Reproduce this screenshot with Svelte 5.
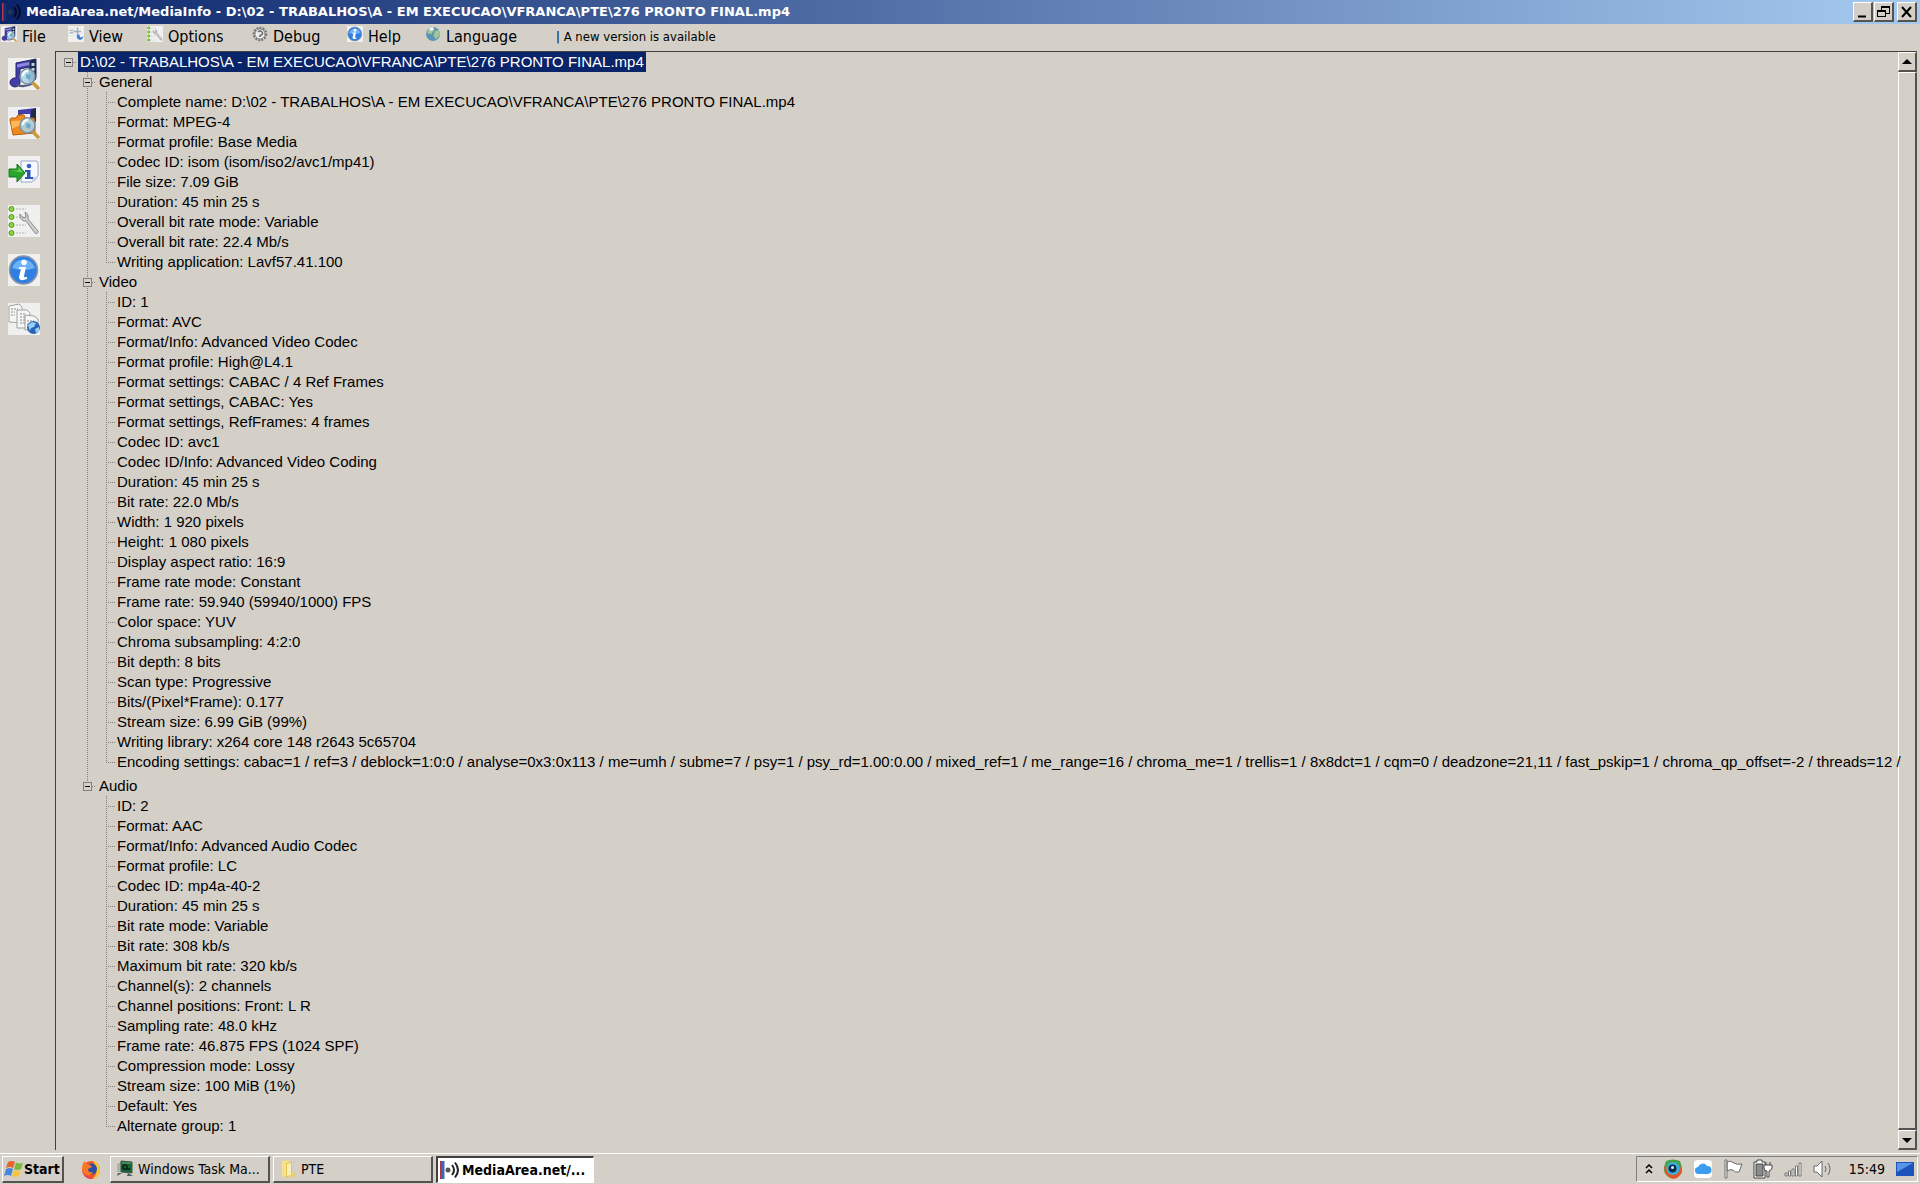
<script>
  const path = 'D:\\02 - TRABALHOS\\A - EM EXECUCAO\\VFRANCA\\PTE\\276 PRONTO FINAL.mp4';

  const menus = ['File', 'View', 'Options', 'Debug', 'Help', 'Language'];
  const menuIcons = ['media', 'sheet', 'options', 'debug', 'info', 'globe'];

  const tools = [
    { icon: 'media', label: 'Open file' },
    { icon: 'folder', label: 'Open folder' },
    { icon: 'export', label: 'Export' },
    { icon: 'options', label: 'Preferences' },
    { icon: 'info', label: 'About' },
    { icon: 'pages', label: 'View' }
  ];

  const sections = [
    {
      name: 'General',
      items: [
        'Complete name: ' + path,
        'Format: MPEG-4',
        'Format profile: Base Media',
        'Codec ID: isom (isom/iso2/avc1/mp41)',
        'File size: 7.09 GiB',
        'Duration: 45 min 25 s',
        'Overall bit rate mode: Variable',
        'Overall bit rate: 22.4 Mb/s',
        'Writing application: Lavf57.41.100'
      ]
    },
    {
      name: 'Video',
      items: [
        'ID: 1',
        'Format: AVC',
        'Format/Info: Advanced Video Codec',
        'Format profile: High@L4.1',
        'Format settings: CABAC / 4 Ref Frames',
        'Format settings, CABAC: Yes',
        'Format settings, RefFrames: 4 frames',
        'Codec ID: avc1',
        'Codec ID/Info: Advanced Video Coding',
        'Duration: 45 min 25 s',
        'Bit rate: 22.0 Mb/s',
        'Width: 1 920 pixels',
        'Height: 1 080 pixels',
        'Display aspect ratio: 16:9',
        'Frame rate mode: Constant',
        'Frame rate: 59.940 (59940/1000) FPS',
        'Color space: YUV',
        'Chroma subsampling: 4:2:0',
        'Bit depth: 8 bits',
        'Scan type: Progressive',
        'Bits/(Pixel*Frame): 0.177',
        'Stream size: 6.99 GiB (99%)',
        'Writing library: x264 core 148 r2643 5c65704',
        'Encoding settings: cabac=1 / ref=3 / deblock=1:0:0 / analyse=0x3:0x113 / me=umh / subme=7 / psy=1 / psy_rd=1.00:0.00 / mixed_ref=1 / me_range=16 / chroma_me=1 / trellis=1 / 8x8dct=1 / cqm=0 / deadzone=21,11 / fast_pskip=1 / chroma_qp_offset=-2 / threads=12 /'
      ]
    },
    {
      name: 'Audio',
      items: [
        'ID: 2',
        'Format: AAC',
        'Format/Info: Advanced Audio Codec',
        'Format profile: LC',
        'Codec ID: mp4a-40-2',
        'Duration: 45 min 25 s',
        'Bit rate mode: Variable',
        'Bit rate: 308 kb/s',
        'Maximum bit rate: 320 kb/s',
        'Channel(s): 2 channels',
        'Channel positions: Front: L R',
        'Sampling rate: 48.0 kHz',
        'Frame rate: 46.875 FPS (1024 SPF)',
        'Compression mode: Lossy',
        'Stream size: 100 MiB (1%)',
        'Default: Yes',
        'Alternate group: 1'
      ]
    }
  ];
</script>

{#snippet note()}
  <path d="M8 5 28 1v18.500a5 4 0 0 1-3 3.500l-4 1V9l-9 2v13a5 4.500 0 1 1-4-4Z" fill="#4240a8" stroke="#24246c" />
  <path d="M9 6.500 21 4v3L9 9.500Z" fill="#8c88e0" />
  <path d="m22 3 6-2v20l-6 3Z" fill="#1f2c48" />
  <path d="M23.500 5h3v3h-3zm0 5h3v3h-3z" fill="#b9d4e4" />
  <path d="M9 27q8 3 17-2" stroke="#555a80" stroke-width="2" fill="none" />
{/snippet}

{#snippet lens()}
  <path d="m24 24 6 6" stroke="#c89a3c" stroke-width="3.500" stroke-linecap="round" />
  <circle cx="19.500" cy="18.500" r="7.500" fill="#a9d3ea" fill-opacity=".85" stroke="#7d93a5" stroke-width="1.500" />
  <path d="M14.500 18q1-5 6-5.500" stroke="#fff" stroke-width="2" fill="none" />
  <path d="m18 16 5 1-1 5-4-2Z" fill="#6fa9c8" />
{/snippet}

{#snippet icon(name)}
  <svg class="art" viewBox="0 0 32 32" aria-hidden="true">
    <rect width="32" height="32" fill="#f0f0f0" />
    {#if name === 'media'}
      {@render note()}
      {@render lens()}
    {:else if name === 'folder'}
      <path d="M10 3 28 1v14H10Z" fill="#4240a8" />
      <path d="M14 7h8v8h-8z" fill="#f0f0f0" />
      <path d="m23 3 5-2v14h-5Z" fill="#1f2c48" />
      <path d="M2 13q0-2 2-2h4l2-3h6l1 3h9l1 3v12L5 28Z" fill="#ee8a1c" stroke="#b65e0c" />
      <path d="m3 14 23-1-1 7Q12 16 4 22Z" fill="#ffb757" />
      {@render lens()}
    {:else if name === 'export'}
      <path d="M13 5h15q2 0 2 2v13l-6 6H13Z" fill="#f7f9ff" stroke="#9ba6c4" />
      <path d="M30 20q-1 5-6 6 1-3 0-5 3 1 6-1Z" fill="#c5cde2" />
      <path d="M1 13h8V8l8 9-8 9v-5H1Z" fill="#28a428" stroke="#14761c" />
      <path d="M2.500 14.500h8v-3l4.500 5Z" fill="#6ed45c" />
      <circle cx="21" cy="10" r="2.300" fill="#3768c8" />
      <path d="M17 14h5.500v7H25v2h-8v-2h2v-5h-2Z" fill="#2d57b4" />
    {:else if name === 'options'}
      {#each [4, 12, 20, 28] as y}
        <circle cx="3.500" cy={y} r="2.500" fill="#8ed63c" stroke="#4f9a20" />
        <path d="M8 {y}h10" stroke="#b4b4b4" stroke-dasharray="2 1" />
      {/each}
      <path d="M12 9q-1 5 4 7l2 0 9 12q3 2 3-2L20 14q1-5-3-7l1 5-3 1Z" fill="#cfcfcf" stroke="#8c8c8c" />
    {:else if name === 'info'}
      <circle cx="15.500" cy="16" r="14" fill="#2f7fe0" stroke="#8894a8" stroke-width="1.500" />
      <path d="M4 14a12 12 0 0 1 23 0Q16 18 4 14Z" fill="#6db1f6" />
      <circle cx="16" cy="8.500" r="2.800" fill="#fff" />
      <path d="M11 13h7l-2 9q0 2 3 1v2q-8 3-8-2l2-8h-2Z" fill="#fff" />
    {:else if name === 'pages'}
      <g fill="#f6f6f6" stroke="#a0a0a0">
        <path d="M1 3 11 1l3 3v16L1 19Z" />
        <path d="m9 7 10 0 3 3v15H9Z" />
        <path d="m17 12 9 1 4 3v11H17Z" />
      </g>
      <path d="M3 6h7M3 9h4M3 12h4m6-2v12m3-12v12m3-1h7m-7-3h7" stroke="#888" stroke-dasharray="2 1" />
      <circle cx="25.500" cy="24.500" r="6.500" fill="#2864b4" />
      <path d="m20 22 4-3 4 1-2 4-3 1-1 3Zm7 4 4-2v4l-3 2Z" fill="#98d0f4" />
    {:else if name === 'sheet'}
      <path d="M1 5h10v14H1Z" fill="#fff" stroke="#d0d0d0" />
      <path d="M3 9h7M3 14h7M19 3v14M11 11h15" stroke="#a4aebb" stroke-width="3" />
      <path d="M18 17q-2 9 6 11 6-1 7-8l-4 3q-4 1-4-6Z" fill="#3f80cc" />
    {:else if name === 'debug'}
      <rect width="32" height="32" fill="#d4d0c8" />
      <circle cx="16" cy="16" r="12" fill="#e4e4e4" stroke="#777" stroke-width="5" stroke-dasharray="4 2" />
      <circle cx="16" cy="16" r="10" fill="#eee" stroke="#888" stroke-width="2" />
      <path d="M12 12q4-4 8 0t-4 7v3" stroke="#666" stroke-width="3" fill="none" />
    {:else if name === 'globe'}
      <rect width="32" height="32" fill="#d4d0c8" />
      <circle cx="16" cy="16" r="14" fill="#5d94b4" />
      <path d="m5 8 8-6 6 5-6 9-8-1Zm15 2 8-2 2 9-8 10-5-8Z" fill="#a3c795" />
      <path d="m8 4 8-2 2 5-7 3Z" fill="#eef5f6" />
    {/if}
  </svg>
{/snippet}

{#snippet waves(light)}
  <svg class="waves" viewBox="0 0 20 18" aria-hidden="true">
    <path d="M1 0v18" stroke="#b4344c" stroke-width="2" />
    <path d="M3 0v18" stroke={light ? '#3c68b4' : '#14306c'} stroke-width="3" />
    <circle cx="8" cy="9" r="2.500" fill={light ? '#555' : '#253452'} />
    <path d="M12 4q4 5 0 10M15 1.500q6 7.500 0 15" stroke={light ? '#222' : '#040a24'} stroke-width="2" fill="none" />
  </svg>
{/snippet}

<div class="window">
  <header class="title">
    {@render waves(false)}
    <h1>MediaArea.net/MediaInfo - {path}</h1>
    <div class="controls">
      <button class="raised" aria-label="Minimize">
        <svg viewBox="0 0 16 16"><path d="M3 12.500h8" stroke="#000" stroke-width="2" /></svg>
      </button>
      <button class="raised" aria-label="Restore">
        <svg viewBox="0 0 16 16" fill="none" stroke="#000" shape-rendering="crispEdges">
          <path d="M5 6V2.500h8.500V9H10M5 3.500h8M1.500 6.500h8v6h-8zM2 7.500h8" />
        </svg>
      </button>
      <button class="raised close" aria-label="Close">
        <svg viewBox="0 0 16 16"><path d="m3 3 9 10M12 3 3 13" stroke="#000" stroke-width="2" /></svg>
      </button>
    </div>
  </header>

  <nav class="menu">
    {#each menus as name, i}
      <button>{@render icon(menuIcons[i])}{name}</button>
    {/each}
    <button class="notice">| A new version is available</button>
  </nav>

  <main>
    <aside>
      {#each tools as tool}
        <button aria-label={tool.label}>{@render icon(tool.icon)}</button>
      {/each}
    </aside>

    <div class="panel">
      <div class="tree">
        <div class="row">
          <button class="toggle" aria-label="Collapse file"></button>
          <span class="label selected">{path}</span>
        </div>
        <ul class="sections">
          {#each sections as section}
            <li>
              <div class="row">
                <button class="toggle" aria-label="Collapse {section.name}"></button>
                <span class="label">{section.name}</span>
              </div>
              <ul class="leaves">
                {#each section.items as item}
                  <li>{item}</li>
                {/each}
              </ul>
            </li>
          {/each}
        </ul>
      </div>
      <div class="scrollbar">
        <button class="raised" aria-label="Scroll up">
          <svg viewBox="0 0 16 16"><path d="m3 10 5-5 5 5Z" /></svg>
        </button>
        <div class="thumb raised"></div>
        <button class="raised" aria-label="Scroll down">
          <svg viewBox="0 0 16 16"><path d="m3 6 5 5 5-5Z" /></svg>
        </button>
      </div>
    </div>
  </main>

  <footer>
    <button class="start raised">
      <svg viewBox="0 0 20 20" aria-hidden="true">
        <path d="M4 3q4-2 7 0L9 9q-3-2-7 0Z" fill="#e8642c" />
        <path d="M12 3.500q4 2 7 0L17 10q-4 2-7 0Z" fill="#7cb83c" />
        <path d="M2 10q4-2 7 0l-2 7q-3-2-7 0Z" fill="#4888dc" />
        <path d="M10 11q3 2 7 0l-2 6q-4 2-7 0Z" fill="#f8c43c" />
      </svg>
      Start
    </button>
    <button class="firefox" aria-label="Firefox">
      <svg viewBox="0 0 20 20" aria-hidden="true">
        <circle cx="10" cy="11" r="9" fill="#f4522c" />
        <path d="M12 1q8 4 7 12-2 6-8 7 6-5 4-9-1-5-3-10Z" fill="#fcc430" />
        <circle cx="10.500" cy="10" r="5.500" fill="#2c50a8" />
        <path d="M1 10q0-6 3-8 0 3 3 3 3 1 4 3l-4 2q0 4 5 3-2 4-6 3-4-1-5-6Z" fill="#f87828" />
        <path d="M2 14q3 5 10 5l-2 1q-6-1-8-6Z" fill="#e42868" />
      </svg>
    </button>
    <div class="tasks">
      <button class="task raised">
        <svg viewBox="0 0 20 20" aria-hidden="true">
          <path d="M2 5 6 3v10H2Z" fill="#aab4a8" />
          <path d="m6 2 11 1v11l-11-1Z" fill="#186434" stroke="#3c5848" />
          <path d="M8 10V7q2-3 4 0v3M8 10h7" stroke="#08301c" stroke-width="2" fill="none" />
          <path d="M7 4h9" stroke="#64b878" />
          <path d="m3 14 4 0-5 3Zm10 0 5 3h-6Z" fill="#4c6054" />
        </svg>
        <span>Windows Task Ma...</span>
      </button>
      <button class="task raised">
        <svg viewBox="0 0 20 20" aria-hidden="true">
          <path d="m4 2 7-1v15l-7 2Z" fill="#f6e28c" />
          <path d="m8 4 6-1v13l-6 3Z" fill="#e3c45c" />
          <path d="m9 5 4-1v12l-4 1Z" fill="#fbf0b4" />
          <path d="m14 13 3 1v4l-5 1Z" fill="#e9cf74" />
        </svg>
        <span>PTE</span>
      </button>
      <button class="task active">
        {@render waves(true)}
        <span>MediaArea.net/...</span>
      </button>
    </div>
    <div class="tray">
      <button aria-label="Show hidden icons" class="chevrons">
        <svg viewBox="0 0 8 10" fill="none" stroke="#000" stroke-width="1.500"><path d="m1 4 3-3 3 3M1 9l3-3 3 3" /></svg>
      </button>
      <svg viewBox="0 0 20 20" aria-hidden="true">
        <path d="M3 2q7-3 14 0 2 5 2 9 0 4-3 6-6 4-12 0-4-4-3-9Z" fill="#48a048" />
        <path d="M1 8q1 10 9 12 7-1 9-8l-2-5Z" fill="#e2562c" />
        <circle cx="10" cy="9.500" r="6.500" fill="#38b4dc" />
        <circle cx="9.500" cy="9.500" r="4" fill="#0c2c50" />
        <circle cx="9.500" cy="8.500" r="1.500" fill="#d8f0fc" />
      </svg>
      <svg viewBox="0 0 20 20" aria-hidden="true">
        <rect x="1" y="1" width="18" height="18" rx="4" fill="#fff" />
        <path d="M6 15a3.500 3.500 0 0 1-1-7 5 5 0 0 1 9-1 4 4 0 0 1 1 8Z" fill="#3c9cf0" />
      </svg>
      <svg viewBox="0 0 20 20" aria-hidden="true" fill="#fff" stroke="#6a6a6a">
        <path d="M2 1h2v18H2zM4 3q4-2 7 1 3 2 8 1l-3 8q-4 1-6-2-3-1-6 1Z" />
      </svg>
      <svg viewBox="0 0 20 20" aria-hidden="true" fill="#fff" stroke="#444">
        <path d="M1 3h3V1h5v2h3v16H1Z" />
        <path d="M3 5h7v12H3Z" fill="#8c8c8c" />
        <path d="M13 3v3m4-3v3M11 6h8v3q-1 3-3 3v6h-2v-6q-3 0-3-3Z" />
      </svg>
      <svg viewBox="0 0 20 20" aria-hidden="true" fill="#fff" stroke="#777">
        <path d="M2 14h2v3H2zM5.500 12h2v5h-2zM9 10h2v7H9zM12.500 7h2v10h-2zM16 4h2v13h-2z" />
      </svg>
      <svg viewBox="0 0 20 20" aria-hidden="true" fill="#fff" stroke="#666">
        <path d="M1 7h3l5-5v16l-5-5H1Z" />
        <path d="M12 7q2 3 0 6m3-9q4 6 0 12" fill="none" />
      </svg>
      <time>15:49</time>
      <svg class="desk" viewBox="0 0 20 20" aria-hidden="true">
        <rect x="1" y="3" width="18" height="14" fill="#1c54bc" />
        <path d="M2 4h16L2 13Z" fill="#5a94e8" />
      </svg>
    </div>
  </footer>
</div>

<style>
  :global(body) {
    margin: 0;
    background: #d4d0c8;
  }

  .window {
    display: flex;
    flex-direction: column;
    min-height: 100vh;
    overflow: hidden;
    background: #d4d0c8;
    color: #000;
    font: 15px/20px 'Liberation Sans', Arial, sans-serif;
  }

  button {
    box-sizing: border-box;
    margin: 0;
    padding: 0;
    border: 0;
    background: none;
    color: inherit;
    font: inherit;
  }

  svg {
    display: block;
    flex: none;
  }

  .raised {
    border: solid;
    border-width: 1px 2px 2px 1px;
    border-color: #fff #55534f #55534f #fff;
    background: #d4d0c8;
  }

  .title {
    display: flex;
    align-items: center;
    height: 24px;
    padding: 0 3px 0 2px;
    background: linear-gradient(to right, #0a246a, #a6caf0);
    color: #fff;
  }

  .waves {
    width: 20px;
    height: 18px;
  }

  h1 {
    flex: 1;
    margin: 0 0 0 4px;
    font: bold 13px/24px 'DejaVu Sans', sans-serif;
    white-space: nowrap;
  }

  .controls {
    display: flex;
    gap: 1px;
  }

  .controls button {
    display: grid;
    place-items: center;
    width: 20px;
    height: 20px;
  }

  .controls svg {
    width: 16px;
    height: 16px;
  }

  .controls .close {
    margin-left: 2px;
  }

  .menu {
    display: grid;
    grid-template-columns: 67px 79px 105px 95px 78px 131px auto;
    justify-content: start;
    height: 27px;
    padding-left: 1px;
    font: 16px/26px 'DejaVu Sans Condensed', 'DejaVu Sans', sans-serif;
  }

  .menu button {
    display: flex;
    gap: 5px;
    height: 26px;
    white-space: nowrap;
  }

  .menu .art {
    width: 16px;
    height: 16px;
    margin-top: 2px;
  }

  .menu .notice {
    font-size: 13px;
  }

  main {
    display: flex;
    flex: 1;
  }

  aside {
    display: flex;
    flex-direction: column;
    gap: 17px;
    width: 55px;
    padding: 7px 0 0 8px;
    box-sizing: border-box;
  }

  aside .art {
    width: 32px;
    height: 32px;
  }

  .panel {
    display: flex;
    flex: 1;
    min-width: 0;
    margin: 0 3px 3px 0;
    border-top: 1px solid #404040;
    border-left: 1px solid #404040;
  }

  .tree {
    z-index: 1;
    flex: 1;
    min-width: 0;
    padding-left: 8px;
    white-space: nowrap;
  }

  ul {
    margin: 0;
    padding: 0;
    list-style: none;
  }

  .row {
    display: flex;
    align-items: center;
    height: 20px;
    background: repeating-linear-gradient(to right, #808080 0 1px, transparent 1px 2px) 9px 10px / 4px 1px no-repeat;
  }

  .toggle {
    width: 9px;
    height: 9px;
    margin: 1px 5px 0 0;
    border: 1px solid #808080;
    background: linear-gradient(#000, #000) center / 5px 1px no-repeat #d4d0c8;
  }

  .label {
    padding: 0 2px;
  }

  .selected {
    background: #0a246a;
    color: #fff;
  }

  .sections {
    padding-left: 19px;
  }

  .sections > li {
    background: repeating-linear-gradient(#808080 0 1px, transparent 1px 2px) 4px 0 / 1px 100% no-repeat;
  }

  .sections > li:last-child {
    padding-top: 4px;
    background-size: 1px 10px;
  }

  .leaves {
    padding-left: 23px;
  }

  .leaves li {
    height: 20px;
    padding-left: 11px;
    background:
      repeating-linear-gradient(#808080 0 1px, transparent 1px 2px) 0 0 / 1px 100% no-repeat,
      repeating-linear-gradient(to right, #808080 0 1px, transparent 1px 2px) 0 10px / 10px 1px no-repeat;
  }

  .leaves li:last-child {
    background-size: 1px 10px, 10px 1px;
  }

  .scrollbar {
    display: flex;
    flex-direction: column;
    width: 19px;
  }

  .scrollbar button {
    display: grid;
    place-items: center;
    height: 20px;
  }

  .scrollbar svg {
    width: 16px;
    height: 16px;
  }

  .thumb {
    flex: 1;
  }

  footer {
    display: flex;
    align-items: center;
    height: 31px;
    box-sizing: border-box;
    padding: 0 2px;
    border-top: 1px solid #fff;
    font: 14px/20px 'DejaVu Sans Condensed', 'DejaVu Sans', sans-serif;
  }

  footer svg {
    width: 20px;
    height: 20px;
  }

  .start {
    display: flex;
    align-items: center;
    width: 62px;
    height: 27px;
    padding-left: 1px;
    font-weight: bold;
  }

  .firefox {
    margin: 0 9px 0 17px;
  }

  .tasks {
    display: flex;
    flex: 1;
    gap: 3px;
  }

  .task {
    display: flex;
    align-items: center;
    gap: 3px;
    width: 160px;
    height: 27px;
    padding-left: 4px;
    white-space: nowrap;
  }

  .active {
    gap: 2px;
    width: 158px;
    padding-left: 2px;
    border: solid;
    border-width: 2px 1px 1px 2px;
    border-color: #404040 #fff #fff #404040;
    background: #fff;
    font-weight: bold;
  }

  .tray {
    display: flex;
    align-items: center;
    gap: 10px;
    height: 26px;
    box-sizing: border-box;
    padding: 0 2px 0 8px;
    border: 1px solid;
    border-color: #808080 #fff #fff #808080;
  }

  .chevrons svg {
    width: 8px;
    height: 10px;
  }

  .tray time {
    padding-left: 6px;
  }
</style>
